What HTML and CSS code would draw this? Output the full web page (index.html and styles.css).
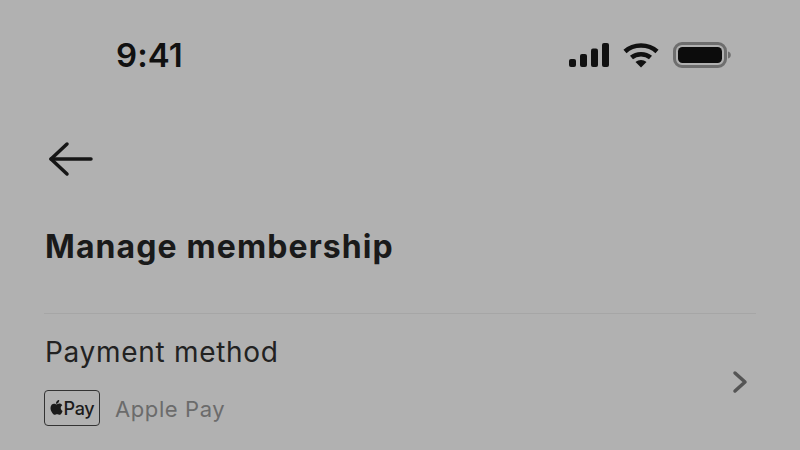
FILE: index.html
```html
<!DOCTYPE html>
<html lang="en">
<head>
<meta charset="utf-8">
<title>Manage membership</title>
<link rel="stylesheet" href="styles.css">
</head>
<body>
<div class="screen">
  <div class="status">
    <span class="time">9:41</span>
    <div class="status-icons">
      <svg class="signal" width="40" height="26" viewBox="0 0 40 26"><rect x="0" y="17" width="7" height="8" rx="2"/><rect x="11" y="12" width="7" height="13" rx="2"/><rect x="22" y="6.500" width="7" height="18.500" rx="2"/><rect x="33" y="1" width="7" height="24" rx="2"/></svg>
      <svg class="wifi" width="36" height="26" viewBox="0 0 36 26" fill="none" stroke="#111" stroke-width="4.500"><path d="M2 9.500C10.500 1.500 25.500 1.500 34 9.500"/><path d="M8.500 15.500C13.500 11 22.500 11 27.500 15.500"/><path class="wifi-dot" d="M12.500 20C15.500 17.300 20.500 17.300 23.500 20L18 25.500Z"/></svg>
      <svg class="battery" width="58" height="28" viewBox="0 0 58 28"><rect class="bat-shell" x="1.500" y="2.500" width="51" height="23" rx="7.500"/><rect class="bat-fill" x="5" y="6" width="44" height="16" rx="4.500"/><path class="bat-cap" d="M55 10.500c1.800.5 2.800 1.800 2.800 3.500s-1 3-2.800 3.500z"/></svg>
    </div>
  </div>
  <div class="nav">
    <svg width="46" height="36" viewBox="0 0 46 36" fill="none" stroke="#161616" stroke-width="3.500" stroke-linecap="round" stroke-linejoin="round"><path d="M43 18H3"/><path d="M19 3L3 18L19 33"/></svg>
  </div>
  <h1 class="title">Manage membership</h1>
  <div class="row">
    <div class="row-main">
      <div class="row-label">Payment method</div>
      <div class="row-value">
        <span class="pay-badge"><svg class="apple-svg" width="13" height="15" viewBox="0 0 13 15"><path d="M9.200 0c.1 1-.3 2-.9 2.700-.6.700-1.500 1.200-2.400 1.100-.1-1 .4-2 .9-2.600C7.400.500 8.400 0 9.200 0zM12.300 5.200c-.1.100-1.600.9-1.600 2.800 0 2.100 1.900 2.900 1.900 2.900s-1.300 3.900-3 3.900c-.9 0-1.300-.6-2.500-.6s-1.600.6-2.400.6C3.200 14.800.500 11.200.500 8c0-2.900 1.800-4.300 3.500-4.300 1 0 1.900.7 2.500.7s1.600-.8 2.800-.8c.5 0 2.100.1 3 1.600z"/></svg>Pay</span>
        <span class="pay-name">Apple Pay</span>
      </div>
    </div>
    <svg class="chev" width="16" height="24" viewBox="0 0 16 24" fill="none" stroke="#555" stroke-width="3.500" stroke-linecap="round" stroke-linejoin="round"><path d="M3 3L13 12L3 21"/></svg>
  </div>
</div>
</body>
</html>
```
FILE: styles.css
```css
* { box-sizing: border-box; }
html, body { margin: 0; padding: 0; }
body { width: 800px; height: 450px; overflow: hidden; background: #b1b1b1; font-family: Inter, "Liberation Sans", sans-serif; }
.screen { width: 800px; height: 450px; padding: 0 44px; display: flex; flex-direction: column; }
.status { display: flex; justify-content: space-between; align-items: center; height: 38px; margin-top: 36px; padding: 0 25px 0 72px; }
.time { font-size: 33px; font-weight: 600; color: #111; line-height: 38px; letter-spacing: 0.100px; }
.status-icons { display: flex; align-items: center; gap: 14px; }
.signal { fill: #111; }
.wifi-dot { fill: #111; stroke: none; }
.bat-shell { fill: none; stroke: #6e6e6e; stroke-width: 3; }
.bat-fill { fill: #0c0c0c; }
.bat-cap { fill: #6e6e6e; }
.nav { margin-top: 67px; height: 36px; padding-left: 4px; display: flex; flex-shrink: 0; }
.title { margin: 50px 0 0 1px; font-size: 32px; font-weight: 700; line-height: 40px; color: #1a1a1a; letter-spacing: 1.100px; }
.row { margin-top: 46px; border-top: 1px solid #a6a6a6; width: 712px; flex-shrink: 0; display: flex; align-items: center; justify-content: space-between; padding: 20px 8px 0 0; }
.row-label { font-size: 28px; line-height: 36px; color: #222; letter-spacing: 0.700px; margin-left: 1px; }
.row-value { display: flex; align-items: center; gap: 15px; margin-top: 20px; }
.pay-badge { display: flex; align-items: center; justify-content: center; gap: 1px; width: 56px; height: 36px; border: 1.500px solid #333; border-radius: 4px; font-size: 18px; font-weight: 500; letter-spacing: -0.300px; color: #1b1b1b; }
.apple-svg { fill: #1b1b1b; margin-bottom: 2px; }
.pay-name { font-size: 22px; color: #6b6b6b; letter-spacing: 0.600px; padding-top: 2px; }
.chev { margin-top: 3px; }
```
